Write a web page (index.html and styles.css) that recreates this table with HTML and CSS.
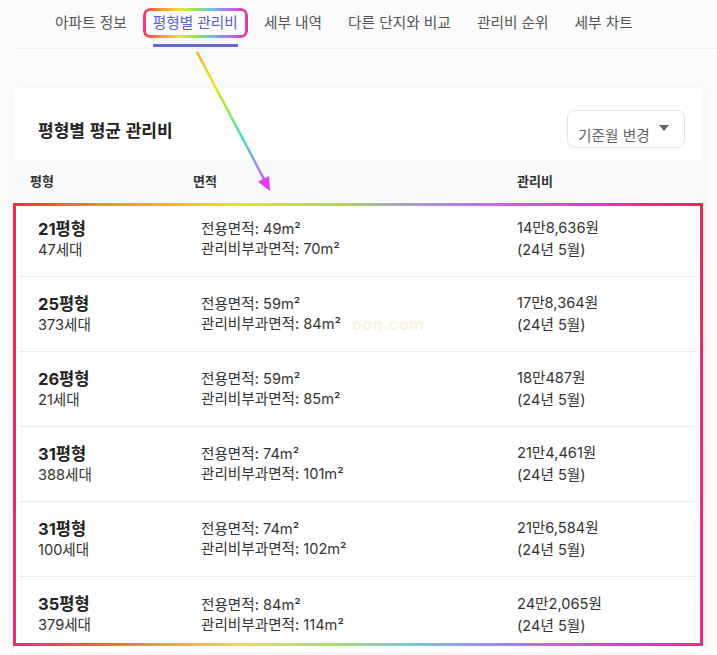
FILE: index.html
```html
<!DOCTYPE html>
<html lang="ko">
<head>
  <meta charset="UTF-8" />
  <meta name="viewport" content="width=device-width, initial-scale=1.0" />
  <title>평형별 관리비</title>
  <link rel="stylesheet" href="styles.css">
</head>
<body>
  <nav class="tabs">
    <a class="tab">아파트 정보</a>
    <a class="tab active">평형별 관리비</a>
    <a class="tab">세부 내역</a>
    <a class="tab">다른 단지와 비교</a>
    <a class="tab">관리비 순위</a>
    <a class="tab">세부 차트</a>
  </nav>

  <section class="card">
    <div class="card-head">
      <h2>평형별 평균 관리비</h2>
      <button type="button" class="month-btn">
        <span>기준월 변경</span>
        <svg class="caret" width="10" height="6" viewBox="0 0 10 6"><path d="M0 0h10L5 6z" fill="#666"/></svg>
      </button>
    </div>

    <div class="thead">
      <span>평형</span>
      <span>면적</span>
      <span>관리비</span>
    </div>

    <div class="rows">
      <div class="row">
        <div><b>21평형</b><br>47세대</div>
        <div>전용면적: 49m²<br>관리비부과면적: 70m²</div>
        <div class="fee">14만8,636원<br>(24년 5월)</div>
      </div>
      <div class="row">
        <div><b>25평형</b><br>373세대</div>
        <div>전용면적: 59m²<br>관리비부과면적: 84m²</div>
        <div class="fee">17만8,364원<br>(24년 5월)</div>
      </div>
      <div class="row">
        <div><b>26평형</b><br>21세대</div>
        <div>전용면적: 59m²<br>관리비부과면적: 85m²</div>
        <div class="fee">18만487원<br>(24년 5월)</div>
      </div>
      <div class="row">
        <div><b>31평형</b><br>388세대</div>
        <div>전용면적: 74m²<br>관리비부과면적: 101m²</div>
        <div class="fee">21만4,461원<br>(24년 5월)</div>
      </div>
      <div class="row">
        <div><b>31평형</b><br>100세대</div>
        <div>전용면적: 74m²<br>관리비부과면적: 102m²</div>
        <div class="fee">21만6,584원<br>(24년 5월)</div>
      </div>
      <div class="row">
        <div><b>35평형</b><br>379세대</div>
        <div>전용면적: 84m²<br>관리비부과면적: 114m²</div>
        <div class="fee">24만2,065원<br>(24년 5월)</div>
      </div>
      <span class="watermark">oon.com</span>
    </div>
  </section>

  <svg class="arrow" width="717" height="655" viewBox="0 0 717 655">
    <defs>
      <linearGradient id="rb" gradientUnits="userSpaceOnUse" x1="197" y1="52" x2="268" y2="186">
        <stop offset="0" stop-color="#f5ad2e"/>
        <stop offset="0.25" stop-color="#e6e81e"/>
        <stop offset="0.45" stop-color="#8ee84a"/>
        <stop offset="0.65" stop-color="#3ae0c6"/>
        <stop offset="0.82" stop-color="#8c9cf0"/>
        <stop offset="1" stop-color="#e040f0"/>
      </linearGradient>
    </defs>
    <line x1="197" y1="52" x2="265" y2="181" stroke="url(#rb)" stroke-width="2.5"/>
    <polygon points="270,191 258,181.8 269.2,175.9" fill="#e040f0"/>
  </svg>
</body>
</html>
```

FILE: styles.css
```css
body { margin: 0; background: #fbfbfb; font-family: "Inter", "Noto Sans CJK KR", sans-serif; color: #333; position: relative; min-height: 655px; overflow: hidden; }

.tabs { display: flex; gap: 26px; margin-left: 15px; padding-left: 40px; padding-bottom: 1px; border-bottom: 1px solid #ececec; }
.tab { font-family: "Noto Sans CJK KR", sans-serif; font-size: 14.7px; line-height: 18px; color: #555; padding: 13px 0; border-bottom: 3px solid transparent; position: relative; }
.tab.active { color: #5a5ed6; border-bottom-color: #6467d8; }
.tab.active::before { content: ""; position: absolute; left: -10px; right: -10px; top: 8px; height: 30px; border: 3px solid transparent; border-radius: 7px; box-sizing: border-box;
  background: linear-gradient(90deg, #f0307a, #f59a2a 18%, #eee52a 35%, #8fe060 52%, #6fb8f0 68%, #b070f0 82%, #f0309a) border-box;
  -webkit-mask: linear-gradient(#000 0 0) padding-box, linear-gradient(#000 0 0); -webkit-mask-composite: xor; mask-composite: exclude; }

.card { margin: 39px 15px 0 14px; background: #fff; box-shadow: 0 0 14px rgba(0, 0, 0, 0.04); }
.card-head { display: flex; justify-content: space-between; align-items: center; height: 72px; box-sizing: border-box; padding: 10px 17px 0 24px; }
.card-head h2 { margin: 0; font-family: "Noto Sans CJK KR", sans-serif; font-size: 17px; font-weight: 700; color: #222; }
.month-btn { display: flex; align-items: flex-end; gap: 9px; width: 118px; height: 38px; box-sizing: border-box; padding: 0 10px 2px; background: #fff; border: 1px solid #e4e4e4; border-radius: 8px; font-family: "Noto Sans CJK KR", sans-serif; font-size: 14.7px; color: #666; }
.month-btn span { line-height: 20px; }
.caret { align-self: flex-start; margin-top: 14px; }

.thead { display: grid; grid-template-columns: 163px 324px 1fr; height: 42px; align-items: center; padding-left: 16px; background: #f8f9fa; font-family: "Noto Sans CJK KR", sans-serif; font-size: 13px; font-weight: 700; color: #333; padding-bottom: 2px; box-sizing: border-box; }

.rows { position: relative; }
.rows::after { content: ""; position: absolute; top: 1px; left: -1px; right: -1px; bottom: 6px; pointer-events: none;
  background:
    linear-gradient(90deg, #f0284a, #f6901e 13%, #e9e31c 32%, #b8d84a 46%, #a8a8c0 56%, #b47ae8 66%, #e83ce8 80%, #f02890 91%, #f0284a) top / 100% 3px no-repeat,
    linear-gradient(90deg, #f0287a, #f06040 12%, #f8a030 22%, #e8e040 33%, #a8e070 46%, #80c0e0 59%, #a080f0 73%, #e040e8 85%, #f02890) bottom / 100% 3px no-repeat,
    linear-gradient(#f0284a, #f0287a) left / 3px 100% no-repeat,
    linear-gradient(#f0284a, #f0288a) right / 3px 100% no-repeat; }
.row { display: grid; grid-template-columns: 163px 316px 1fr; align-items: center; height: 75px; box-sizing: border-box; margin: 0 5px; padding-left: 19px; border-bottom: 1px solid #ececec; font-size: 14.6px; line-height: 20px; color: #333; }
.row:last-of-type { border-bottom: 0; }
.row b { font-size: 16.5px; font-weight: 700; color: #222; line-height: 20px; }
.row .fee { line-height: 22px; }

.watermark { position: absolute; left: 338px; top: 112px; font-size: 16px; font-weight: 700; color: rgba(240, 225, 170, 0.35); letter-spacing: 0.5px; pointer-events: none; }

.arrow { position: absolute; left: 0; top: 0; pointer-events: none; }
```
